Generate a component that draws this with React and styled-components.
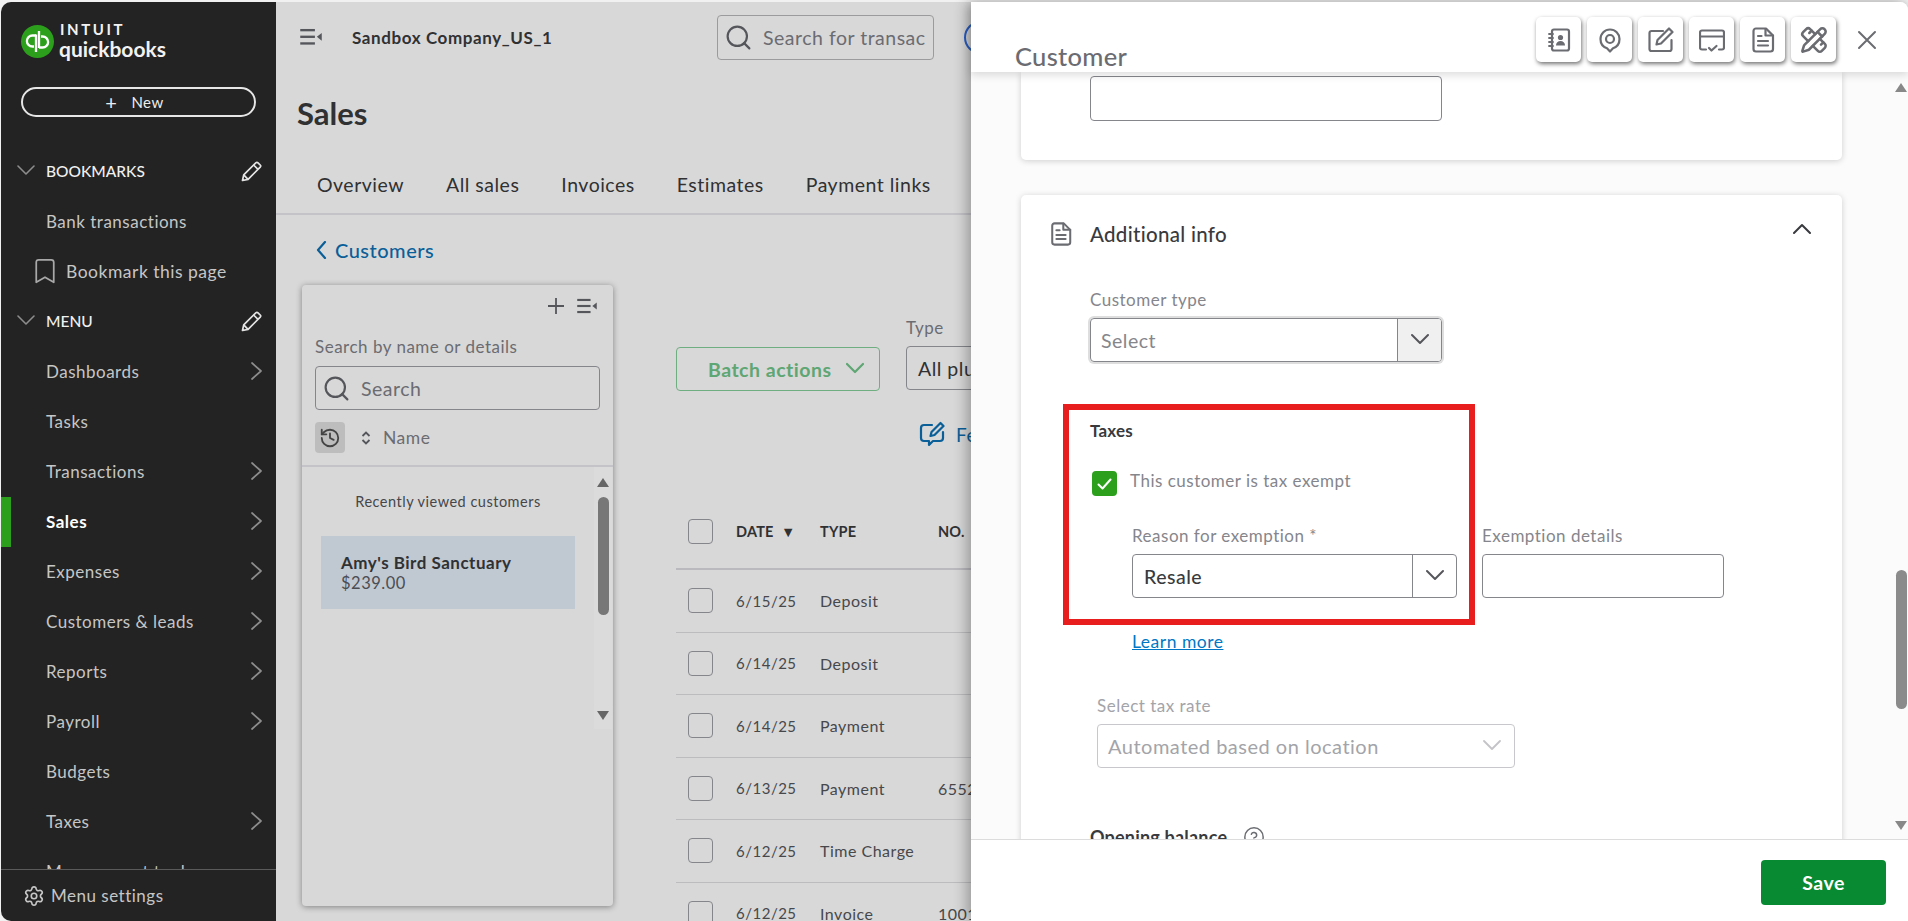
import React from 'react';
import styled, { createGlobalStyle } from 'styled-components';
import { Bookmark, CircleHelp, History, PencilRuler, Search as SearchGlyph, Settings } from 'lucide-react';

const GlobalStyle = createGlobalStyle`
    html, body {
        margin: 0;
        padding: 0;
        background: #f1f1f1;
        overflow: hidden;
    }
    body {
        font-family: "Lato", "Open Sans", sans-serif;
        font-size: 17px;
        letter-spacing: 0.5px;
        color: #303133;
    }
    * {
        box-sizing: border-box;
    }
    svg {
        flex: none;
    }
`

const Page = styled.div`
    display: flex;
    width: 1908px;
    height: 921px;
    padding: 2px 0 0 1px;
    overflow: hidden;
`

/* left nav */

const Sidebar = styled.aside`
    flex: none;
    display: flex;
    flex-direction: column;
    width: 275px;
    background: #232323;
    border-radius: 10px 0 0 10px;
    color: #c6c6c6;
    overflow: hidden;
`

const Brand = styled.div`
    display: flex;
    align-items: center;
    gap: 5px;
    height: 78px;
    padding-left: 20px;
    color: #f2f2f2;
`

const Wordmark = styled.div`
    display: flex;
    flex-direction: column;
`

const Intuit = styled.span`
    font-size: 15px;
    font-weight: 700;
    line-height: 15px;
    letter-spacing: 2.6px;
    margin-left: 1px;
`

const Quickbooks = styled.span`
    font-size: 21px;
    font-weight: 700;
    line-height: 24px;
    letter-spacing: 0;
`

const NewButton = styled.button`
    display: flex;
    align-items: center;
    justify-content: center;
    gap: 14px;
    flex: none;
    height: 30px;
    margin: 7px 20px 0;
    padding: 0 8px 0 0;
    background: none;
    border: 2px solid #e6e6e6;
    border-radius: 15px;
    color: #ededed;
    font: inherit;
    font-size: 15px;
    letter-spacing: inherit;
`

const PlusSign = styled.span`
    font-size: 20px;
    line-height: 20px;
`

const Nav = styled.nav`
    flex: 1;
    margin-top: 30px;
    overflow: hidden;
`

const NavRow = styled.div`
    position: relative;
    display: flex;
    align-items: center;
    height: 50px;
    padding: 0 10px 2px 45px;
    font-weight: ${props => props.$active ? 700 : 400};
    color: ${props => props.$active ? '#fff' : 'inherit'};

    &::before {
        content: '';
        display: ${props => props.$active ? 'block' : 'none'};
        position: absolute;
        left: 0;
        top: 0;
        bottom: 0;
        width: 10px;
        background: #2ca01c;
    }
`

const GroupRow = styled.div`
    display: flex;
    align-items: center;
    gap: 11px;
    height: 50px;
    padding: 0 14px 2px 16px;
    color: #f0f0f0;
    font-size: 15.5px;
    font-weight: 500;
    letter-spacing: 0;
`

const BookmarkRow = styled.div`
    display: flex;
    align-items: center;
    gap: 6px;
    height: 50px;
    padding: 0 0 2px 29px;
    font-size: 17.5px;
`

const RowEnd = styled.span`
    display: flex;
    margin-left: auto;
`

const SideFooter = styled.div`
    flex: none;
    display: flex;
    align-items: center;
    gap: 6px;
    height: 52px;
    padding-left: 22px;
    border-top: 1px solid #5a5a5a;
`

/* page behind the drawer */

const Main = styled.main`
    flex: none;
    width: 695px;
    background: #d8d8d8;
    overflow: hidden;
`

const Topbar = styled.div`
    display: flex;
    align-items: center;
    height: 70px;
    padding-left: 24px;
`

const Company = styled.div`
    flex: none;
    width: 365px;
    margin-left: 30px;
    font-weight: 700;
    white-space: nowrap;
    letter-spacing: 0.6px;
`

const SearchBox = styled.div`
    flex: none;
    display: flex;
    align-items: center;
    gap: 10px;
    width: ${props => props.$width || 'auto'};
    height: ${props => props.$height || '45px'};
    margin: ${props => props.$margin || 0};
    padding: 0 6px;
    border: 1px solid ${props => props.$line || '#9b9b9e'};
    border-radius: 4px;
    color: #6b6c72;
    font-size: 19.5px;
    white-space: nowrap;
    overflow: hidden;
`

const Avatar = styled.div`
    flex: none;
    width: 33px;
    height: 33px;
    margin-left: 30px;
    border: 2px solid #2a5fc9;
    border-radius: 50%;
`

const PageTitle = styled.h1`
    margin: 21px 0 0 21px;
    font-size: 31px;
    font-weight: 700;
    line-height: 40px;
    letter-spacing: 0;
`

const Tabs = styled.div`
    display: flex;
    align-items: center;
    gap: 42px;
    height: 60px;
    margin-top: 22px;
    padding-left: 41px;
    border-bottom: 2px solid #c3c3c8;
    font-size: 19.5px;
    white-space: nowrap;
`

const BackLink = styled.a`
    display: flex;
    align-items: center;
    gap: 4px;
    height: 20px;
    margin: 25px 0 0 37px;
    color: #0a5f98;
    font-size: 20px;
    font-weight: 500;
`

const Content = styled.div`
    display: flex;
    margin-top: 25px;
    padding-left: 26px;
`

const Panel = styled.section`
    flex: none;
    display: flex;
    flex-direction: column;
    width: 311px;
    height: 621px;
    border-radius: 4px;
    box-shadow: 0 1px 6px rgba(0, 0, 0, 0.4);
`

const PanelTools = styled.div`
    display: flex;
    align-items: center;
    justify-content: flex-end;
    gap: 13px;
    height: 42px;
    padding-right: 16px;
    flex: none;
`

const PanelLabel = styled.div`
    margin: 10px 0 0 13px;
    line-height: 20px;
    color: #6b6c72;
`

const SortRow = styled.div`
    display: flex;
    align-items: center;
    height: 31px;
    margin-top: 12px;
    padding-left: 13px;
    color: #6b6c72;
    font-size: 17.5px;
    flex: none;
`

const HistoryButton = styled.div`
    display: flex;
    align-items: center;
    justify-content: center;
    width: 30px;
    height: 31px;
    margin-right: 16px;
    background: #bdbdbd;
    border-radius: 4px;
    color: #444;
`

const SortLabel = styled.span`
    margin-left: 12px;
`

const PanelBody = styled.div`
    flex: 1;
    display: flex;
    margin-top: 12px;
    border-top: 2px solid #c3c3c8;
    min-height: 0;
`

const CustomerList = styled.div`
    flex: 1;
    min-width: 0;
`

const ListHeading = styled.div`
    margin-top: 25px;
    line-height: 20px;
    font-size: 14.5px;
    text-align: center;
    color: #45464a;
`

const ListCard = styled.div`
    display: flex;
    flex-direction: column;
    justify-content: center;
    height: 73px;
    margin: 24px 19px 0;
    padding-left: 20px;
    background: #c0c8d2;
    line-height: 21px;
`

const ListName = styled.strong`
    font-weight: 700;
`

const ListAmount = styled.span`
    font-size: 16.5px;
    color: #4c4d52;
`

const Track = styled.div`
    flex: none;
    display: flex;
    flex-direction: column;
    align-items: center;
    width: ${props => props.$width};
    height: ${props => props.$height};
    margin-right: ${props => props.$right || '0'};
    background: ${props => props.$bg};
`

const ArrowUp = styled.span`
    flex: none;
    width: 0;
    height: 0;
    margin-top: 11px;
    border-left: 6px solid transparent;
    border-right: 6px solid transparent;
    border-bottom: 9px solid ${props => props.$color};
`

const ArrowDown = styled.span`
    flex: none;
    width: 0;
    height: 0;
    margin-top: auto;
    margin-bottom: 9px;
    border-left: 6px solid transparent;
    border-right: 6px solid transparent;
    border-top: 9px solid ${props => props.$color};
`

const Thumb = styled.span`
    flex: none;
    width: 11px;
    height: ${props => props.$height};
    margin-top: ${props => props.$top};
    border-radius: 6px;
    background: ${props => props.$color};
`

const TableArea = styled.div`
    flex: none;
    width: 640px;
    margin-left: 63px;
    padding-top: 33px;
`

const Filters = styled.div`
    display: flex;
    align-items: flex-start;
    gap: 26px;
`

const BatchButton = styled.button`
    display: flex;
    align-items: center;
    gap: 14px;
    width: 204px;
    height: 44px;
    margin-top: 29px;
    padding-left: 31px;
    background: none;
    border: 1px solid #6fae80;
    border-radius: 4px;
    color: #5ea673;
    font: inherit;
    font-size: 19.5px;
    font-weight: 700;
    letter-spacing: inherit;
`

const FieldLabel = styled.div`
    margin-bottom: 8px;
    line-height: 20px;
    color: ${props => props.$color || '#85868c'};
    white-space: nowrap;
`

const TypeSelect = styled.div`
    display: flex;
    align-items: center;
    width: 220px;
    height: 44px;
    padding-left: 11px;
    border: 1px solid #85868c;
    border-radius: 4px;
    font-size: 19.5px;
`

const FeedbackLink = styled.div`
    display: flex;
    align-items: center;
    gap: 11px;
    height: 26px;
    margin: 30px 0 0 243px;
    color: #0a5f98;
    font-size: 19px;
`

const TableHead = styled.div`
    display: grid;
    grid-template-columns: 48px 84px 118px 1fr;
    align-items: center;
    height: 75px;
    margin-top: 48px;
    padding-left: 12px;
    border-bottom: 2px solid #b9b9be;
    font-size: 14.5px;
    font-weight: 700;
    letter-spacing: 0.2px;
`

const TableRow = styled.div`
    display: grid;
    grid-template-columns: 48px 84px 118px 1fr;
    align-items: center;
    height: 62.5px;
    padding-left: 12px;
    border-bottom: 1px solid #bcbcbf;
    color: #47484c;
    font-size: 16px;
`

const DateCell = styled.span`
    font-size: 15px;
`

const RowCheck = styled.span`
    display: block;
    width: 25px;
    height: 25px;
    border: 1px solid #85868c;
    border-radius: 4px;
`

/* customer drawer */

const Drawer = styled.section`
    flex: 1;
    position: relative;
    z-index: 2;
    display: flex;
    flex-direction: column;
    min-width: 0;
    background: #fff;
    border-top-right-radius: 8px;
    box-shadow: -4px 0 14px rgba(0, 0, 0, 0.3);
`

const DrawerHeader = styled.header`
    position: relative;
    z-index: 2;
    flex: none;
    display: flex;
    height: 70px;
    background: #fff;
    border-top-right-radius: 8px;
    box-shadow: 0 3px 9px rgba(0, 0, 0, 0.14);
`

const DrawerTitle = styled.h2`
    align-self: flex-end;
    margin: 0 0 2px 44px;
    font-size: 25.5px;
    font-weight: 500;
    line-height: 28px;
    letter-spacing: 0.3px;
    color: #6b6c72;
`

const Toolbar = styled.div`
    display: flex;
    gap: 6px;
    margin: 15px 0 0 auto;
`

const ToolButton = styled.button`
    display: flex;
    align-items: center;
    justify-content: center;
    width: 45px;
    height: 45px;
    padding: 0;
    background: #fff;
    border: none;
    border-radius: 5px;
    color: #6b6c72;
    box-shadow: 1px 2px 4px rgba(0, 0, 0, 0.55);
`

const CloseButton = styled.button`
    display: flex;
    align-items: center;
    justify-content: center;
    width: 20px;
    height: 20px;
    margin: 28px 31px 0 21px;
    padding: 0;
    background: none;
    border: none;
    color: #6b6c72;
`

const DrawerBody = styled.div`
    flex: 1;
    display: flex;
    justify-content: space-between;
    min-height: 0;
    background: #fbfbfb;
    overflow: hidden;
`

const Cards = styled.div`
    flex: none;
    display: flex;
    flex-direction: column;
    gap: 35px;
    width: 871px;
    padding-left: 50px;
`

const TopCard = styled.div`
    flex: none;
    height: 88px;
    padding: 4px 0 0 69px;
    background: #fff;
    border-radius: 0 0 5px 5px;
    box-shadow: 0 1px 6px rgba(0, 0, 0, 0.18);
`

const InfoCard = styled.div`
    position: relative;
    flex: none;
    height: 800px;
    background: #fff;
    border-radius: 5px;
    box-shadow: 0 1px 6px rgba(0, 0, 0, 0.18);
`

const InfoHeader = styled.div`
    display: flex;
    align-items: center;
    gap: 17px;
    height: 78px;
    padding: 0 31px 0 28px;
    font-size: 20.5px;
    font-weight: 500;
    letter-spacing: 0.3px;
    color: #393a3d;
`

const InfoIcon = styled.span`
    display: flex;
    color: #6b6c72;
`

const CollapseIcon = styled.span`
    display: flex;
    margin: -10px 0 0 auto;
`

const Form = styled.div`
    padding: 17px 0 0 69px;
`

const TextBox = styled.div`
    width: ${props => props.$width};
    height: ${props => props.$height || '44px'};
    background: #fff;
    border: 1px solid #85868c;
    border-radius: 4px;
`

const Combo = styled.div`
    display: flex;
    align-items: stretch;
    width: ${props => props.$width};
    height: 44px;
    border: 1px solid ${props => props.$faint ? '#c8c8cc' : '#85868c'};
    border-radius: 4px;
    color: ${props => props.$faint ? '#a3a4a9' : props.$muted ? '#85868c' : '#393a3d'};
    font-size: ${props => props.$faint ? '20px' : '19.5px'};
    box-shadow: ${props => props.$halo ? '0 0 0 2px #dedede' : 'none'};
    overflow: hidden;
`

const ComboText = styled.span`
    flex: 1;
    display: flex;
    align-items: center;
    padding-left: ${props => props.$pad};
    font-weight: ${props => props.$strong ? 500 : 400};
    white-space: nowrap;
`

const ComboButton = styled.span`
    flex: none;
    display: flex;
    align-items: center;
    justify-content: center;
    width: 44px;
    border-left: ${props => props.$plain ? 'none' : '1px solid #85868c'};
    background: ${props => props.$filled ? '#f0f0f0' : 'transparent'};
`

const SectionTitle = styled.div`
    line-height: 20px;
    font-size: 17px;
    font-weight: 700;
    letter-spacing: 0.2px;
    color: #393a3d;
`

const TaxTitle = styled(SectionTitle)`
    margin-top: 59px;
`

const CheckRow = styled.label`
    display: flex;
    align-items: flex-start;
    gap: 13px;
    margin: 30px 0 0 2px;
    line-height: 20px;
    color: #85868c;
`

const GreenCheck = styled.span`
    flex: none;
    display: flex;
    align-items: center;
    justify-content: center;
    width: 25px;
    height: 25px;
    background: #2ca01c;
    border-radius: 4px;
`

const ReasonRow = styled.div`
    display: flex;
    gap: 25px;
    margin: 30px 0 0 42px;
`

const LearnMore = styled.a`
    display: block;
    margin: 34px 0 0 42px;
    line-height: 20px;
    font-size: 17.5px;
    color: #0077c5;
    text-decoration: underline;
`

const TaxRate = styled.div`
    margin: 44px 0 0 7px;
`

const OpeningBalance = styled(SectionTitle)`
    display: flex;
    align-items: center;
    gap: 16px;
    margin-top: 58px;
    font-size: 18px;
`

const RedBox = styled.div`
    position: absolute;
    left: 42px;
    top: 209px;
    width: 412px;
    height: 221px;
    border: 6px solid #e81e1e;
    pointer-events: none;
`

const DrawerFooter = styled.footer`
    flex: none;
    display: flex;
    align-items: center;
    justify-content: flex-end;
    height: 82px;
    padding: 3px 22px 0 0;
    border-top: 1px solid #dcdcdc;
`

const SaveButton = styled.button`
    width: 125px;
    height: 45px;
    background: #078a32;
    border: none;
    border-radius: 4px;
    color: #fff;
    font: inherit;
    font-size: 19.5px;
    font-weight: 700;
    letter-spacing: inherit;
`

/* small drawings */

const Chevron = ({ dir = 'down', size = 18, color = 'currentColor', width = 2 }) => {
    const paths = {
        down: 'M1 4l8 8 8-8',
        up: 'M1 13l8-8 8 8',
        left: 'M12 1L5 9l7 8',
        right: 'M4 1l9 8-9 8',
    }
    return (
        <svg width={size} height={size} viewBox="0 0 18 18" fill="none" stroke={color} strokeWidth={width} strokeLinecap="round" strokeLinejoin="round">
            <path d={paths[dir]} />
        </svg>
    )
}

const PanelToggle = ({ size = 22, color = '#55565b' }) => (
    <svg width={size} height={size * 0.8} viewBox="0 0 22 18" fill={color}>
        <rect x="0" y="1" width="15" height="2.4" />
        <rect x="0" y="7.8" width="15" height="2.4" />
        <rect x="0" y="14.6" width="15" height="2.4" />
        <path d="M17 9l5-4v8z" />
    </svg>
)

const Pencil = () => (
    <svg width="21" height="21" viewBox="0 0 21 21" fill="none" stroke="#e4e4e4" strokeWidth="1.7" strokeLinejoin="round">
        <path d="M1.5 19.5l1.2-5.6L14.8 1.8a1.6 1.6 0 0 1 2.2 0l2.2 2.2a1.6 1.6 0 0 1 0 2.2L7.1 18.3z" />
        <path d="M12.6 4l4.4 4.4M2.7 13.9l4.4 4.4" />
    </svg>
)

const QbLogo = () => (
    <svg width="33" height="33" viewBox="0 0 33 33">
        <circle cx="16.5" cy="16.5" r="16.5" fill="#2ca01c" />
        <g fill="none" stroke="#fff" strokeWidth="2.3">
            <path d="M15 10.5h-3.6a5.5 5.5 0 0 0 0 11H13" />
            <path d="M15 9.5V27" />
            <path d="M18 22.5h3.6a5.5 5.5 0 0 0 0-11H20" />
            <path d="M18 6v17" />
        </g>
    </svg>
)

const SortArrows = () => (
    <svg width="10" height="14" viewBox="0 0 10 14" fill="none" stroke="#55565b" strokeWidth="1.8">
        <path d="M1.5 5L5 1.5 8.5 5M1.5 9L5 12.5 8.5 9" />
    </svg>
)

const FeedbackIcon = () => (
    <svg width="26" height="26" viewBox="0 0 26 26" fill="none" stroke="#0a5f98" strokeWidth="2.2" strokeLinejoin="round" strokeLinecap="round">
        <path d="M13 4H5a3 3 0 0 0-3 3v10a3 3 0 0 0 3 3h5v4l4-4h7a3 3 0 0 0 3-3v-6" />
        <path d="M21.5 2l3 3-9 9-4 1 1-4z" />
    </svg>
)

const ContactsIcon = () => (
    <svg width="26" height="26" viewBox="0 0 26 26" fill="none" stroke="currentColor" strokeWidth="2.2" strokeLinecap="round">
        <rect x="6" y="2.5" width="17" height="21" rx="2" />
        <path d="M3 7h4M3 11h4M3 15h4M3 19h4" strokeWidth="1.8" />
        <circle cx="14.5" cy="10.5" r="2.6" fill="currentColor" stroke="none" />
        <path d="M10 18.5c0-3 2-4.5 4.5-4.5s4.5 1.5 4.5 4.5z" fill="currentColor" stroke="none" />
    </svg>
)

const PinIcon = () => (
    <svg width="26" height="26" viewBox="0 0 26 26" fill="none" stroke="currentColor" strokeWidth="2.2" strokeLinejoin="round">
        <path d="M13 24.5l-3-3.2C6.2 20 3.5 16.5 3.5 12a9.5 9.5 0 0 1 19 0c0 4.5-2.7 8-6.5 9.3z" />
        <circle cx="13" cy="12" r="4" />
    </svg>
)

const EditIcon = () => (
    <svg width="26" height="26" viewBox="0 0 26 26" fill="none" stroke="currentColor" strokeWidth="2.2" strokeLinejoin="round" strokeLinecap="round">
        <path d="M23.5 13v9a2 2 0 0 1-2 2H3.5a2 2 0 0 1-2-2V6a2 2 0 0 1 2-2H15" />
        <path d="M21 1.5L24.5 5 13 16.5l-4.5 1 1-4.5z" />
    </svg>
)

const BillingIcon = () => (
    <svg width="26" height="26" viewBox="0 0 26 26" fill="none" stroke="currentColor" strokeWidth="2.2" strokeLinejoin="round" strokeLinecap="round">
        <path d="M7 22.5H3a2 2 0 0 1-2-2v-15a2 2 0 0 1 2-2h20a2 2 0 0 1 2 2v15a2 2 0 0 1-2 2h-3" />
        <path d="M1 9.5h24" />
        <path d="M10 21l2.5 2.5 5-4.500" />
    </svg>
)

const NoteIcon = ({ size = 26 }) => (
    <svg width={size} height={size} viewBox="0 0 26 26" fill="none" stroke="currentColor" strokeWidth="2.2" strokeLinejoin="round" strokeLinecap="round">
        <path d="M6 1.5h10l7 7V22a2.5 2.5 0 0 1-2.5 2.5H6A2.5 2.5 0 0 1 3.5 22V4A2.5 2.5 0 0 1 6 1.5z" />
        <path d="M15.5 2v6.5H23" />
        <path d="M8 9h3.5M8 14h10M8 18.5h10" />
    </svg>
)

const CloseIcon = () => (
    <svg width="20" height="20" viewBox="0 0 20 20" stroke="currentColor" strokeWidth="2" strokeLinecap="round">
        <path d="M2 2l16 16M18 2L2 18" />
    </svg>
)

const navItems = [
    { label: 'Dashboards', more: true },
    { label: 'Tasks' },
    { label: 'Transactions', more: true },
    { label: 'Sales', more: true, active: true },
    { label: 'Expenses', more: true },
    { label: 'Customers & leads', more: true },
    { label: 'Reports', more: true },
    { label: 'Payroll', more: true },
    { label: 'Budgets' },
    { label: 'Taxes', more: true },
    { label: 'Management tools' },
]

const tabs = ['Overview', 'All sales', 'Invoices', 'Estimates', 'Payment links']

const rows = [
    { date: '6/15/25', type: 'Deposit', no: '' },
    { date: '6/14/25', type: 'Deposit', no: '' },
    { date: '6/14/25', type: 'Payment', no: '' },
    { date: '6/13/25', type: 'Payment', no: '6552' },
    { date: '6/12/25', type: 'Time Charge', no: '' },
    { date: '6/12/25', type: 'Invoice', no: '1001' },
]

const tools = [ContactsIcon, PinIcon, EditIcon, BillingIcon, NoteIcon, () => <PencilRuler size={28} strokeWidth={2.2} />]

const App = () => {
    return (
        <Page>
            <GlobalStyle />

            <Sidebar>
                <Brand>
                    <QbLogo />
                    <Wordmark>
                        <Intuit>INTUIT</Intuit>
                        <Quickbooks>quickbooks</Quickbooks>
                    </Wordmark>
                </Brand>
                <NewButton><PlusSign>+</PlusSign><span>New</span></NewButton>

                <Nav>
                    <GroupRow>
                        <Chevron color="#8d8d8d" width={1.6} />
                        BOOKMARKS
                        <RowEnd><Pencil /></RowEnd>
                    </GroupRow>
                    <NavRow>Bank transactions</NavRow>
                    <BookmarkRow>
                        <Bookmark size={30} strokeWidth={1.4} color="#a8a8a8" />
                        Bookmark this page
                    </BookmarkRow>
                    <GroupRow>
                        <Chevron color="#8d8d8d" width={1.6} />
                        MENU
                        <RowEnd><Pencil /></RowEnd>
                    </GroupRow>
                    {navItems.map(item => (
                        <NavRow key={item.label} $active={item.active}>
                            {item.label}
                            {item.more && <RowEnd><Chevron dir="right" color="#8d8d8d" width={1.7} /></RowEnd>}
                        </NavRow>
                    ))}
                </Nav>

                <SideFooter>
                    <Settings size={22} strokeWidth={1.8} />
                    Menu settings
                </SideFooter>
            </Sidebar>

            <Main>
                <Topbar>
                    <PanelToggle />
                    <Company>Sandbox Company_US_1</Company>
                    <SearchBox $width="217px">
                        <SearchGlyph size={29} strokeWidth={1.8} color="#55565b" />
                        Search for transac
                    </SearchBox>
                    <Avatar />
                </Topbar>

                <PageTitle>Sales</PageTitle>

                <Tabs>
                    {tabs.map(tab => <span key={tab}>{tab}</span>)}
                </Tabs>

                <BackLink>
                    <Chevron dir="left" size={18} width={2.2} />
                    Customers
                </BackLink>

                <Content>
                    <Panel>
                        <PanelTools>
                            <svg width="16" height="16" viewBox="0 0 16 16" stroke="#55565b" strokeWidth="1.8"><path d="M8 0v16M0 8h16" /></svg>
                            <PanelToggle size={20} />
                        </PanelTools>
                        <PanelLabel>Search by name or details</PanelLabel>
                        <SearchBox $margin="9px 13px 0" $line="#85868c" $height="44px">
                            <SearchGlyph size={29} strokeWidth={1.8} color="#55565b" />
                            Search
                        </SearchBox>
                        <SortRow>
                            <HistoryButton><History size={22} strokeWidth={2} /></HistoryButton>
                            <SortArrows />
                            <SortLabel>Name</SortLabel>
                        </SortRow>
                        <PanelBody>
                            <CustomerList>
                                <ListHeading>Recently viewed customers</ListHeading>
                                <ListCard>
                                    <ListName>Amy's Bird Sanctuary</ListName>
                                    <ListAmount>$239.00</ListAmount>
                                </ListCard>
                            </CustomerList>
                            <Track $width="18px" $height="262px" $right="1px" $bg="#dbdbdb">
                                <ArrowUp $color="#666" />
                                <Thumb $color="#777" $height="118px" $top="10px" />
                                <ArrowDown $color="#666" />
                            </Track>
                        </PanelBody>
                    </Panel>

                    <TableArea>
                        <Filters>
                            <BatchButton>
                                Batch actions
                                <Chevron color="#5ea673" width={2.2} />
                            </BatchButton>
                            <div>
                                <FieldLabel $color="#6b6c72">Type</FieldLabel>
                                <TypeSelect>All plus deposits</TypeSelect>
                            </div>
                        </Filters>
                        <FeedbackLink>
                            <FeedbackIcon />
                            Feedback
                        </FeedbackLink>
                        <TableHead>
                            <RowCheck />
                            <span>DATE &nbsp;▼</span>
                            <span>TYPE</span>
                            <span>NO.</span>
                        </TableHead>
                        {rows.map((row, i) => (
                            <TableRow key={i}>
                                <RowCheck />
                                <DateCell>{row.date}</DateCell>
                                <span>{row.type}</span>
                                <span>{row.no}</span>
                            </TableRow>
                        ))}
                    </TableArea>
                </Content>
            </Main>

            <Drawer>
                <DrawerHeader>
                    <DrawerTitle>Customer</DrawerTitle>
                    <Toolbar>
                        {tools.map((Tool, i) => (
                            <ToolButton key={i}><Tool /></ToolButton>
                        ))}
                    </Toolbar>
                    <CloseButton><CloseIcon /></CloseButton>
                </DrawerHeader>

                <DrawerBody>
                    <Cards>
                        <TopCard>
                            <TextBox $width="352px" $height="45px" />
                        </TopCard>

                        <InfoCard>
                            <InfoHeader>
                                <InfoIcon><NoteIcon size={24} /></InfoIcon>
                                Additional info
                                <CollapseIcon><Chevron dir="up" color="#393a3d" width={2} /></CollapseIcon>
                            </InfoHeader>
                            <Form>
                                <FieldLabel>Customer type</FieldLabel>
                                <Combo $width="352px" $halo $muted>
                                    <ComboText $pad="10px">Select</ComboText>
                                    <ComboButton $filled><Chevron color="#55565b" width={2} /></ComboButton>
                                </Combo>

                                <TaxTitle>Taxes</TaxTitle>
                                <CheckRow>
                                    <GreenCheck>
                                        <svg width="15" height="12" viewBox="0 0 15 12" fill="none" stroke="#fff" strokeWidth="2" strokeLinecap="round" strokeLinejoin="round"><path d="M1.5 6.5l4 4 8-9" /></svg>
                                    </GreenCheck>
                                    This customer is tax exempt
                                </CheckRow>
                                <ReasonRow>
                                    <div>
                                        <FieldLabel>Reason for exemption *</FieldLabel>
                                        <Combo $width="325px">
                                            <ComboText $pad="11px" $strong>Resale</ComboText>
                                            <ComboButton><Chevron color="#55565b" width={2} /></ComboButton>
                                        </Combo>
                                    </div>
                                    <div>
                                        <FieldLabel>Exemption details</FieldLabel>
                                        <TextBox $width="242px" />
                                    </div>
                                </ReasonRow>
                                <LearnMore>Learn more</LearnMore>

                                <TaxRate>
                                    <FieldLabel $color="#a3a4a9">Select tax rate</FieldLabel>
                                    <Combo $width="418px" $faint>
                                        <ComboText $pad="10px">Automated based on location</ComboText>
                                        <ComboButton $plain><Chevron color="#c4c4c8" width={1.8} /></ComboButton>
                                    </Combo>
                                </TaxRate>

                                <OpeningBalance>
                                    Opening balance
                                    <CircleHelp size={22} strokeWidth={1.6} color="#6b6c72" />
                                </OpeningBalance>
                            </Form>
                            <RedBox />
                        </InfoCard>
                    </Cards>

                    <Track $width="14px" $height="767px" $bg="transparent">
                        <ArrowUp $color="#888" />
                        <Thumb $color="#8b8b8b" $height="139px" $top="478px" />
                        <ArrowDown $color="#888" />
                    </Track>
                </DrawerBody>

                <DrawerFooter>
                    <SaveButton>Save</SaveButton>
                </DrawerFooter>
            </Drawer>
        </Page>
    )
}

export default App;
